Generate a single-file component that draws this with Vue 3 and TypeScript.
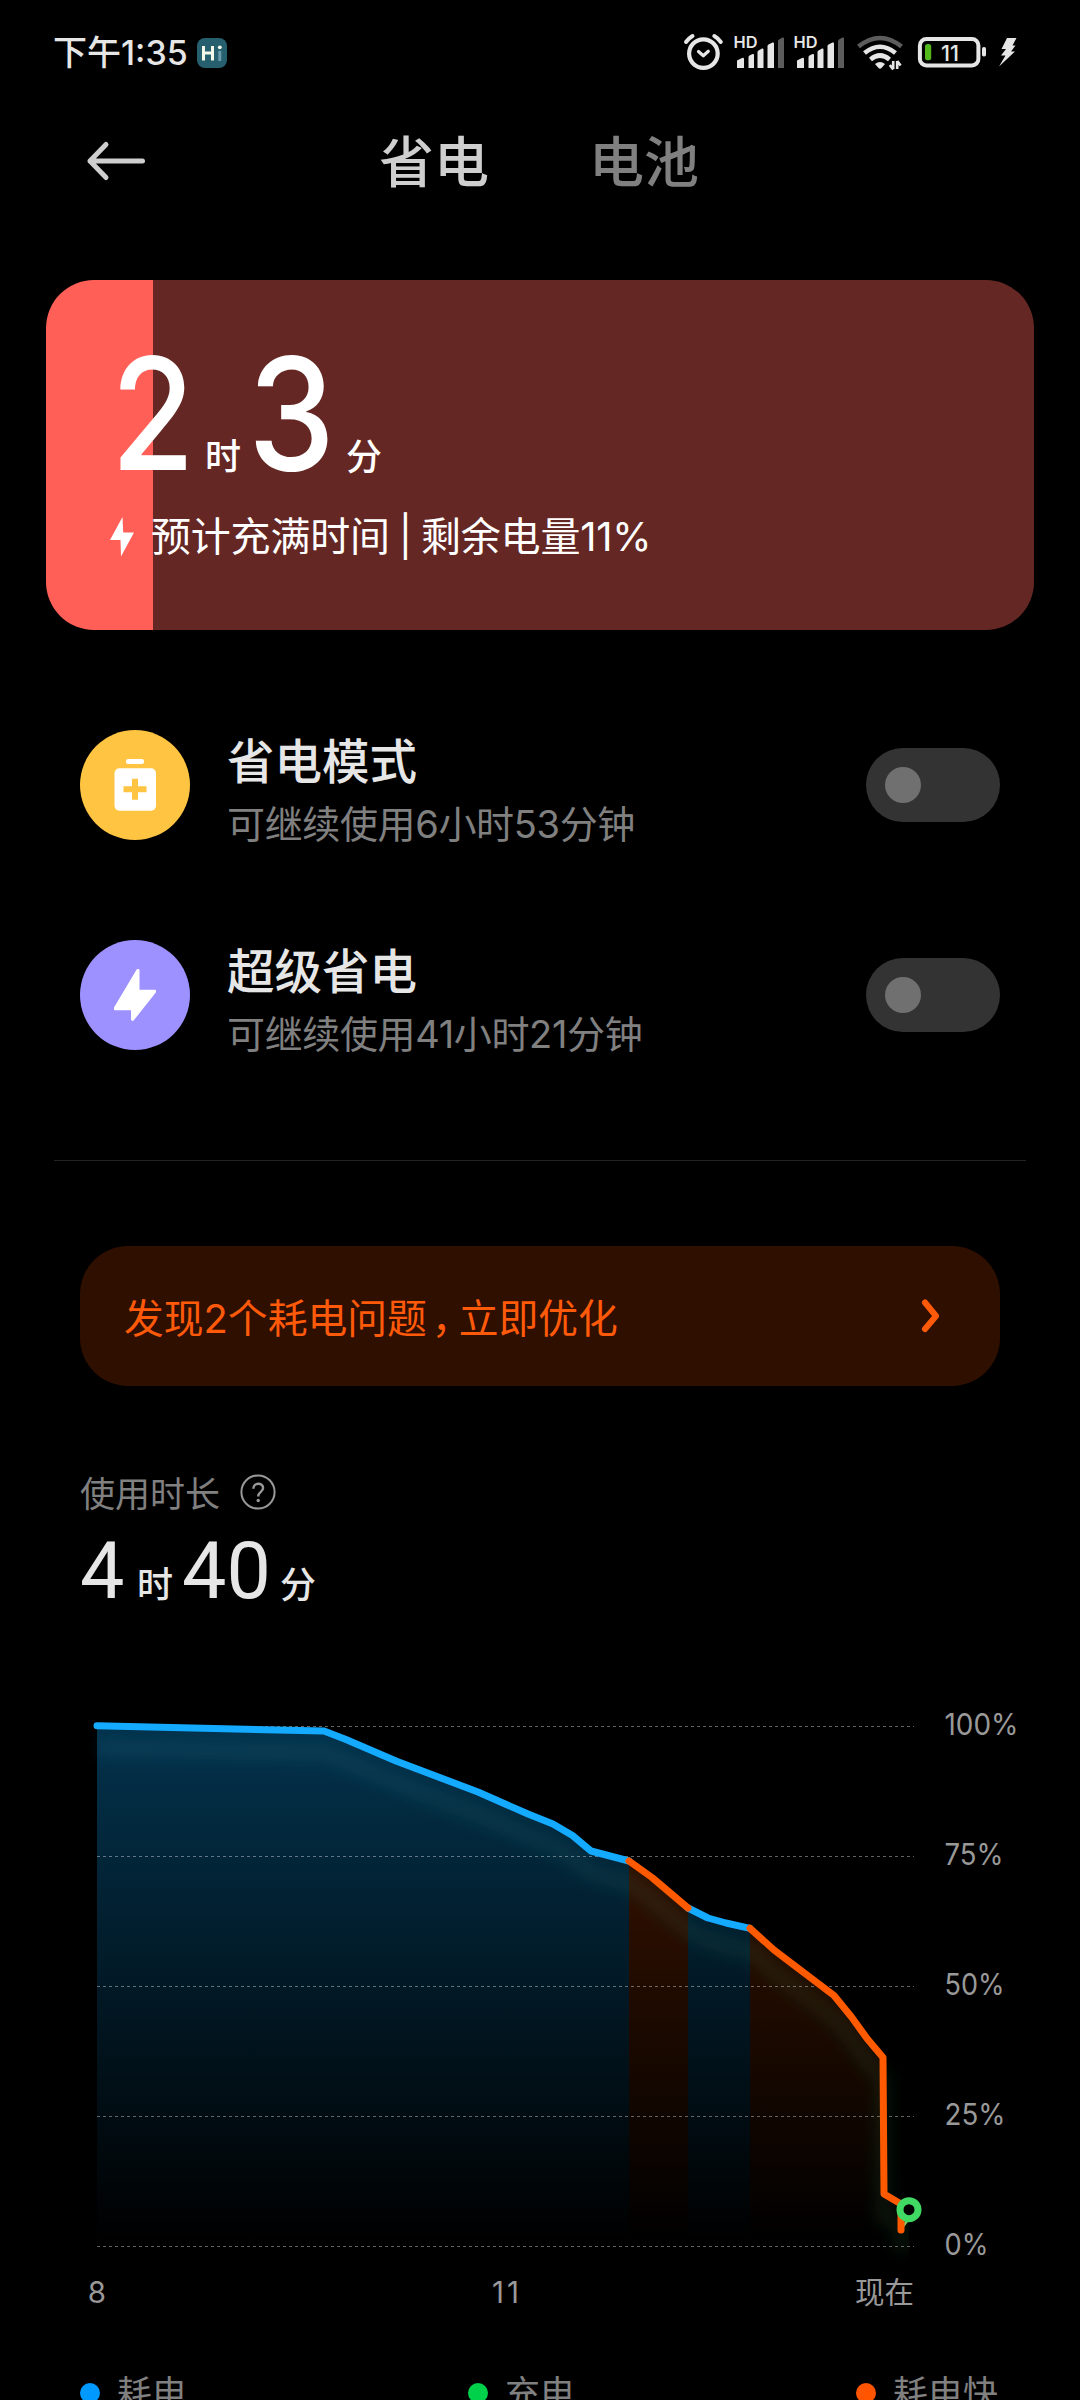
<script setup lang="ts">
interface Mode {
  id: 'saver' | 'ultra'
  title: string
  before: string
  color: string
}

interface Segment {
  kind: 'drain' | 'fast'
  points: [number, number][]
}

const BASE = 2246

const modes: Mode[] = [
  { id: 'saver', title: '省电模式', before: '可继续使用6小时53分钟', color: '#ffc441' },
  { id: 'ultra', title: '超级省电', before: '可继续使用41小时21分钟', color: '#9d91ff' },
]

const segments: Segment[] = [
  {
    kind: 'drain',
    points: [[97, 1725.8], [324, 1731], [346, 1739.5], [396, 1761], [478, 1792], [528, 1814], [553, 1824], [572.5, 1835.5], [591, 1851], [629, 1861]],
  },
  { kind: 'fast', points: [[629, 1861], [652, 1877.5], [688, 1908]] },
  { kind: 'drain', points: [[688, 1908], [708, 1918], [726, 1923], [750, 1928.3]] },
  {
    kind: 'fast',
    points: [[750, 1928.3], [774, 1950], [834, 1995.5], [851.5, 2017], [867, 2038.5], [883, 2057.5], [884, 2194], [901, 2204], [901, 2230]],
  },
]

const ordered = [...segments].sort((a, b) => (a.kind === b.kind ? 0 : a.kind === 'drain' ? -1 : 1))
const line = (s: Segment) => s.points.map((p) => p.join(',')).join(' ')
const area = (s: Segment) => {
  const first = s.points[0]
  const last = s.points[s.points.length - 1]
  return `${first[0]},${BASE} ${line(s)} ${last[0]},${BASE}`
}
const whole = segments.map(line).join(' ')

const levels = [
  { label: '100%', y: 1726.5, w: 72 },
  { label: '75%', y: 1856.5, w: 57 },
  { label: '50%', y: 1986.5, w: 58 },
  { label: '25%', y: 2116.5, w: 59 },
  { label: '0%', y: 2246.5, w: 42 },
]

const legend = [
  { label: '耗电', color: '#0099ff' },
  { label: '充电', color: '#00d14a' },
  { label: '耗电快', color: '#ff5500' },
]
const bars = [
  'M77 60.5l5-2.5q2-1 2 1v9h-7z',
  'M88.500 57q0-1 1-1.500l3-1.500q1.500-.5 1.500 1V68h-5.500z',
  'M97.500 52q0-1 1-1.500l3.500-2q1.500-.5 1.500 1V68h-6z',
  'M107.500 46q0-1 1-1.500l4-2q1.500-.5 1.500 1V68h-6.500z',
]
</script>

<template>
  <div class="screen">
    <div class="status">
      <span class="clock">下午1:35</span>
      <svg class="hi" width="30" height="30" viewBox="0 0 30 30">
        <rect width="30" height="30" rx="8" fill="#265f6d" />
        <path d="M6.500 8v14.500M15.500 8v14.500M6.500 15h9" stroke="#f3f7ea" stroke-width="3" fill="none" />
        <path d="M22.800 13v10" stroke="#6b9ba8" stroke-width="3" />
        <circle cx="22.800" cy="9.300" r="1.900" fill="#f3f7ea" />
      </svg>
      <svg class="tray" width="346" height="50" viewBox="680 30 346 50">
        <g fill="none" stroke="#e6e6e6" stroke-linecap="round" stroke-linejoin="round">
          <circle cx="703.400" cy="53.600" r="14.300" stroke-width="4.200" />
          <path d="M698.500 51.500l4.800 4.300 5-4.500" stroke-width="3.200" />
          <path d="M686 42q3-4 6.500-6M720.800 42q-3-4-6.500-6" stroke-width="4" />
        </g>
        <g v-for="n in 2" :key="n" :transform="`translate(${600 + n * 60} 0)`">
          <text x="73.500" y="48" class="hd" textLength="24" lengthAdjust="spacingAndGlyphs">HD</text>
          <path v-for="b in bars" :key="b" :d="b" fill="#e6e6e6" />
          <path d="M118 41q0-1 1-1.500l3.500-2q1.500-.5 1.500 1V68h-6z" fill="#5c5c5c" />
        </g>
        <g fill="none" stroke="#e6e6e6" stroke-width="4.600">
          <path d="M858.500 46.500Q880 29.500 901.500 46.500" stroke="#5c5c5c" />
          <path d="M864.500 53Q880 40.500 895.500 53" />
          <path d="M870.500 59.500Q880 51.500 889.500 59.500" />
        </g>
        <path d="M875 64Q880 60 885 64L881.500 68Q880 69.500 878.500 68z" fill="#e6e6e6" />
        <path d="M893.200 61v8M889.800 65l3.400 4.500M897.200 69v-8M900.600 65.500l-3.400-4.500" stroke="#e6e6e6" stroke-width="2.600" fill="none" />
        <rect x="919.900" y="38.900" width="58.500" height="26.500" rx="6.500" fill="none" stroke="#e6e6e6" stroke-width="4" />
        <rect x="982" y="47" width="4" height="9.500" rx="1.800" fill="#e6e6e6" />
        <rect x="925" y="44" width="6.200" height="16.300" rx="2.500" fill="#52b81c" />
        <text x="941" y="60.500" class="level" textLength="18" lengthAdjust="spacingAndGlyphs">11</text>
        <path d="M1007 38H1016.500L1012.500 45.500H1015.500L1011 51.500H1015L999 66.500 1005.500 55.500H1001L1006 49H1001.500z" fill="#e6e6e6" />
      </svg>
    </div>

    <div class="tabs">
      <svg class="back" width="60" height="44" viewBox="0 0 60 44">
        <path d="M56.500 22H4M20 5.500L4 22 20 38.500" fill="none" stroke="#cfcfcf" stroke-width="5" stroke-linecap="round" stroke-linejoin="round" />
      </svg>
      <span class="tab on">省电</span>
      <span class="tab">电池</span>
    </div>

    <div class="card">
      <div class="card-body">
        <div class="remain">
          <span class="big first"><i>2</i></span>
          <span class="unit">时</span>
          <span class="big second"><i>3</i></span>
          <span class="unit">分</span>
        </div>
        <div class="note">
          <svg width="24" height="40" viewBox="0 0 24 40">
            <path d="M12.500 0L0 23h10.500L11 39.500 24 15.500H13.200z" fill="#fff" />
          </svg>
          <span>预计充满时间 | 剩余电量11%</span>
        </div>
      </div>
    </div>

    <div class="modes">
      <div v-for="m in modes" :key="m.id" class="mode">
        <svg width="110" height="110" viewBox="0 0 110 110">
          <circle cx="55" cy="55" r="55" :fill="m.color" />
          <template v-if="m.id === 'saver'">
            <rect x="46" y="29" width="18" height="5" rx="2" fill="#fff" />
            <rect x="34.500" y="38.300" width="41.500" height="42.500" rx="5" fill="#fff" />
            <path d="M43.500 59.200h23M55 48.700v21" :stroke="m.color" stroke-width="6" fill="none" />
          </template>
          <path v-else d="M57.500 30L35 67.800V69.200H52V79.500L52.800 80 75 51.800V50.800H58.500V30z" fill="#fff" stroke="#fff" stroke-width="2" stroke-linejoin="round" />
        </svg>
        <div class="mode-text">
          <div class="mode-title">{{ m.title }}</div>
          <div class="mode-sub">{{ m.before }}</div>
        </div>
        <div class="switch"><span></span></div>
      </div>
    </div>

    <div class="rule"></div>

    <div class="banner">
      <span>发现2个耗电问题<span class="comma">，</span>立即优化</span>
      <svg width="26" height="36" viewBox="0 0 26 36">
        <path d="M7 5.500L18 19 7 32" fill="none" stroke="#ff5a0a" stroke-width="6" stroke-linecap="round" stroke-linejoin="round" />
      </svg>
    </div>

    <div class="usage">
      <div class="usage-label">
        <span>使用时长</span>
        <svg class="help" width="36" height="36" viewBox="0 0 36 36">
          <circle cx="18" cy="18" r="16.600" fill="none" stroke="#999" stroke-width="2" />
          <path d="M13.300 14.800c0-6.600 9.800-6.600 9.800-.7 0 3.900-4.900 3.700-4.900 8.300" fill="none" stroke="#999" stroke-width="2.400" />
          <circle cx="18.200" cy="26.500" r="1.700" fill="#999" />
        </svg>
      </div>
      <div class="usage-time">
        <b class="h">4</b><span>时</span><b class="m">40</b><span>分</span>
      </div>
    </div>

    <svg class="chart" width="1080" height="640" viewBox="0 1690 1080 640">
      <defs>
        <linearGradient id="gDrain" gradientUnits="userSpaceOnUse" x1="0" y1="1726" x2="0" y2="2240">
          <stop offset="0" stop-color="#0aa8ff" stop-opacity=".3" />
          <stop offset="1" stop-color="#0aa8ff" stop-opacity="0" />
        </linearGradient>
        <linearGradient id="gFast" gradientUnits="userSpaceOnUse" x1="0" y1="1726" x2="0" y2="2240">
          <stop offset="0" stop-color="#ff5600" stop-opacity=".26" />
          <stop offset="1" stop-color="#ff5600" stop-opacity="0" />
        </linearGradient>
        <linearGradient id="gGlow" gradientUnits="userSpaceOnUse" x1="97" y1="0" x2="909" y2="0">
          <stop offset="0" stop-color="#289cc8" />
          <stop offset=".6" stop-color="#289c90" />
          <stop offset="1" stop-color="#28a850" />
        </linearGradient>
        <filter id="soft" filterUnits="userSpaceOnUse" x="60" y="1690" width="900" height="620">
          <feGaussianBlur stdDeviation="7" />
        </filter>
        <clipPath id="plot"><rect x="90" y="1690" width="819" height="620" /></clipPath>
      </defs>
      <polygon v-for="(s, i) in segments" :key="'a' + i" :points="area(s)" :fill="s.kind === 'drain' ? 'url(#gDrain)' : 'url(#gFast)'" />
      <g clip-path="url(#plot)">
        <polyline :points="whole" transform="translate(0 22)" fill="none" stroke="url(#gGlow)" stroke-opacity=".1" stroke-width="18" filter="url(#soft)" />
      </g>
      <g v-for="l in levels" :key="l.label">
        <line x1="97" x2="914" :y1="l.y" :y2="l.y" class="grid" />
        <text x="944.500" :y="l.y + 8.500" class="axis" :textLength="l.w + 2" lengthAdjust="spacingAndGlyphs">{{ l.label }}</text>
      </g>
      <path d="M901 2231L906 2218H911z" fill="#86c46a" />
      <polyline v-for="(s, i) in ordered" :key="'l' + i" :points="line(s)" fill="none" :stroke="s.kind === 'drain' ? '#14aaff' : '#ff5a00'" stroke-width="7" stroke-linecap="round" stroke-linejoin="round" />
      <circle cx="909" cy="2209.700" r="9" fill="#000" stroke="#40d964" stroke-width="7" />
      <text x="97" y="2303" class="axis" text-anchor="middle">8</text>
      <text x="505.500" y="2303" class="axis" text-anchor="middle" textLength="27">11</text>
      <text x="855" y="2303" class="axis">现在</text>
    </svg>

    <div class="legend">
      <div v-for="l in legend" :key="l.label" class="legend-item">
        <span class="dot" :style="{ background: l.color }"></span>
        <span>{{ l.label }}</span>
      </div>
    </div>
  </div>
</template>

<style>
body {
  background: #000;
}
</style>

<style scoped>
.screen {
  width: 1080px;
  height: 2400px;
  overflow: hidden;
  background: #000;
  color: #e6e6e6;
  font-family: Inter, "Noto Sans CJK SC", sans-serif;
  white-space: nowrap;
  display: flex;
  flex-direction: column;
}
.screen > * {
  flex-shrink: 0;
}
svg {
  display: block;
}
.status {
  height: 106px;
  display: flex;
  align-items: center;
  padding: 0 54px 0 53px;
  box-sizing: border-box;
}
.clock {
  width: 144px;
  font-size: 34px;
  font-weight: 500;
  line-height: 40px;
}
.tray {
  margin: 4px 0 0 auto;
}
.hd {
  font: 600 16px Inter, sans-serif;
  fill: #e6e6e6;
}
.level {
  font: 500 22px Inter, sans-serif;
  fill: #e6e6e6;
}
.tabs {
  height: 110px;
  display: flex;
  align-items: center;
  padding-left: 86px;
}
.back {
  margin-right: 233px;
}
.tab {
  width: 212px;
  padding-top: 2px;
  font-size: 55px;
  font-weight: 500;
  line-height: 70px;
  color: #808080;
}
.tab.on {
  width: 210px;
  color: #cfcfcf;
}
.card {
  margin: 64px 46px 0;
  height: 350px;
  border-radius: 48px;
  background: linear-gradient(to right, #ff5f57 107.5px, #652723 107.5px);
  color: #fff;
}
.card-body {
  padding: 54px 0 0 64px;
}
.remain {
  display: flex;
  align-items: baseline;
  height: 160px;
}
.big {
  font-size: 156px;
  line-height: 160px;
  font-weight: 500;
}
.big i {
  display: inline-block;
  font-style: normal;
  transform: scaleX(0.87);
  transform-origin: left;
}
.first {
  width: 94px;
  padding-left: 1px;
}
.second {
  width: 98px;
  padding-left: 6px;
}
.second i {
  transform: scaleX(0.89);
}
.unit {
  width: 37px;
  font-size: 36px;
  font-weight: 500;
}
.note {
  display: flex;
  align-items: center;
  gap: 17px;
  height: 44px;
  margin-top: 21px;
  font-size: 40px;
  line-height: 44px;
  word-spacing: -2px;
  letter-spacing: -0.2px;
}
.modes {
  margin-top: 100px;
  display: flex;
  flex-direction: column;
  gap: 100px;
}
.mode {
  height: 110px;
  padding: 0 80px;
  display: flex;
  align-items: center;
}
.mode-text {
  margin-left: 37px;
  padding-top: 10px;
  flex: 1;
}
.mode-title {
  font-size: 47.500px;
  line-height: 60px;
  font-weight: 500;
}
.mode-sub {
  margin-top: 8px;
  font-size: 38px;
  line-height: 48px;
  letter-spacing: -0.35px;
  color: #808080;
}
.switch {
  width: 134px;
  height: 74px;
  border-radius: 37px;
  background: #333;
  display: flex;
  align-items: center;
}
.switch span {
  width: 36px;
  height: 36px;
  margin-left: 19px;
  border-radius: 50%;
  background: #707070;
}
.rule {
  height: 1px;
  margin: 110px 54px 0;
  background: #242424;
}
.banner {
  margin: 85px 80px 0;
  height: 140px;
  box-sizing: border-box;
  padding: 0 56px 2px 44px;
  border-radius: 48px;
  background: #2f0f00;
  color: #ff5a0a;
  font-size: 39.800px;
  display: flex;
  align-items: center;
  justify-content: space-between;
}
.comma {
  padding-left: 5px;
  letter-spacing: -13px;
}
.usage {
  margin: 82px 0 0 80px;
}
.usage-label {
  display: flex;
  align-items: center;
  gap: 20px;
  height: 46px;
  font-size: 35px;
  color: #808080;
}
.help {
  margin-top: 2px;
}
.usage-time {
  display: flex;
  align-items: baseline;
  height: 100px;
  margin-top: 7px;
  line-height: 100px;
  font-size: 36px;
  font-weight: 500;
}
.usage-time b {
  font: 400 79px/100px Roboto, sans-serif;
}
.h {
  width: 57px;
}
.usage-time span {
  width: 45px;
}
.usage-time .m {
  width: 98px;
}
.chart {
  margin-top: 69px;
}
.grid {
  stroke: rgba(255, 255, 255, 0.38);
  stroke-width: 1;
  stroke-dasharray: 3 3;
}
.axis {
  font-family: Inter, "Noto Sans CJK SC", sans-serif;
  font-size: 29.500px;
  fill: #999;
}
.legend {
  margin-top: 40px;
  padding-left: 80px;
  display: flex;
  font-size: 35px;
  line-height: 46px;
  color: #808080;
}
.legend-item {
  width: 388px;
  flex-shrink: 0;
  display: flex;
  align-items: center;
  gap: 17px;
}
.dot {
  width: 20px;
  height: 20px;
  border-radius: 50%;
}
</style>
